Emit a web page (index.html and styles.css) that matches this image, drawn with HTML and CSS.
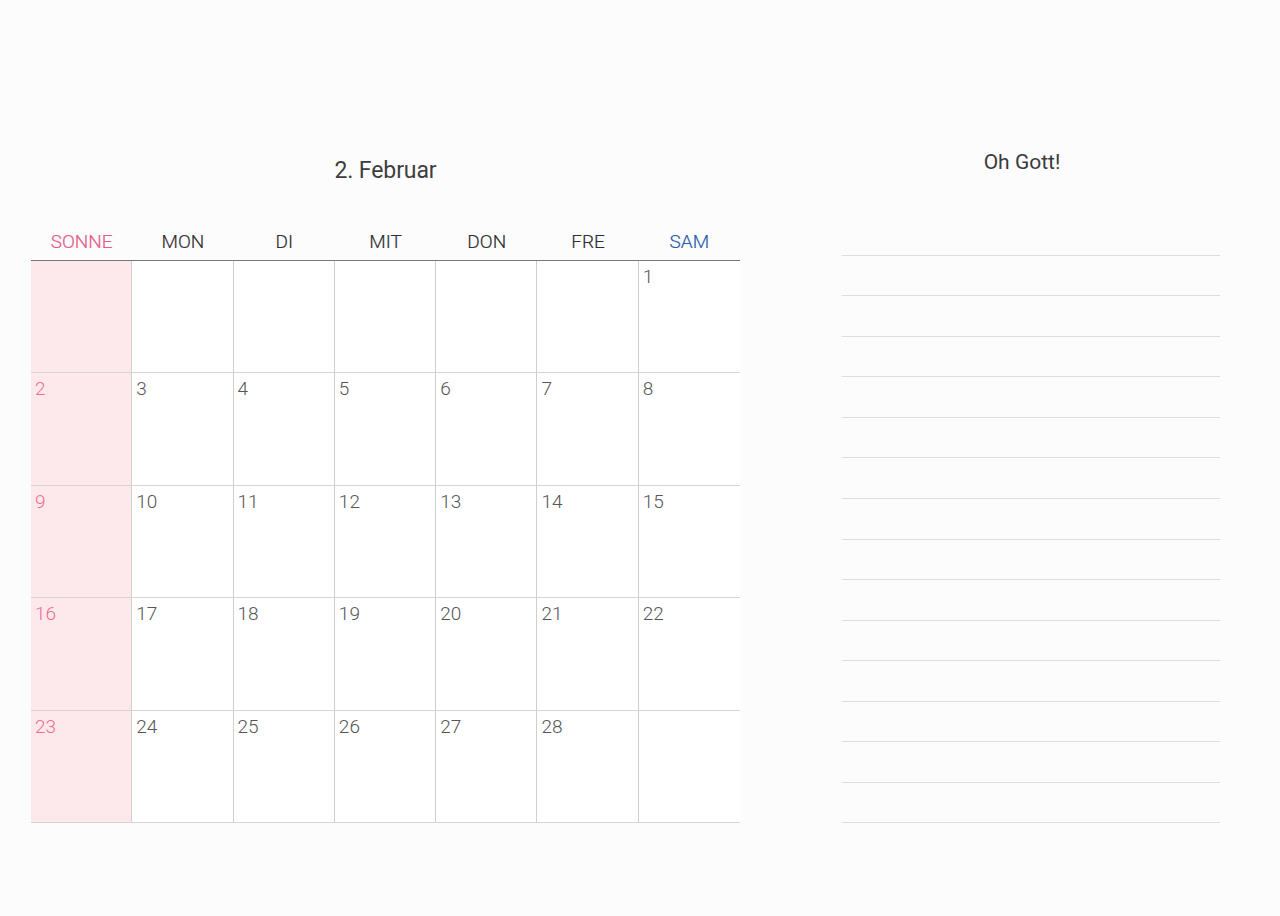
FILE: index.html
```html
<!DOCTYPE html>
<html lang="de">
<head>
<meta charset="utf-8">
<title>Februar</title>
<link rel="stylesheet" href="styles.css">
</head>
<body>
<div class="page">
  <section class="calendar">
    <h1 class="month-title">2. Februar</h1>
    <div class="weekdays">
      <div class="wd sun">SONNE</div>
      <div class="wd">MON</div>
      <div class="wd">DI</div>
      <div class="wd">MIT</div>
      <div class="wd">DON</div>
      <div class="wd">FRE</div>
      <div class="wd sat">SAM</div>
    </div>
    <div class="grid">
      <div class="cell sun"></div><div class="cell"></div><div class="cell"></div><div class="cell"></div><div class="cell"></div><div class="cell"></div><div class="cell last"><span>1</span></div>
      <div class="cell sun"><span>2</span></div><div class="cell"><span>3</span></div><div class="cell"><span>4</span></div><div class="cell"><span>5</span></div><div class="cell"><span>6</span></div><div class="cell"><span>7</span></div><div class="cell last"><span>8</span></div>
      <div class="cell sun"><span>9</span></div><div class="cell"><span>10</span></div><div class="cell"><span>11</span></div><div class="cell"><span>12</span></div><div class="cell"><span>13</span></div><div class="cell"><span>14</span></div><div class="cell last"><span>15</span></div>
      <div class="cell sun"><span>16</span></div><div class="cell"><span>17</span></div><div class="cell"><span>18</span></div><div class="cell"><span>19</span></div><div class="cell"><span>20</span></div><div class="cell"><span>21</span></div><div class="cell last"><span>22</span></div>
      <div class="cell sun"><span>23</span></div><div class="cell"><span>24</span></div><div class="cell"><span>25</span></div><div class="cell"><span>26</span></div><div class="cell"><span>27</span></div><div class="cell"><span>28</span></div><div class="cell last"></div>
    </div>
  </section>
  <section class="notes">
    <h2 class="notes-title">Oh Gott!</h2>
    <div class="lines">
      <div class="line"></div><div class="line"></div><div class="line"></div><div class="line"></div><div class="line"></div>
      <div class="line"></div><div class="line"></div><div class="line"></div><div class="line"></div><div class="line"></div>
      <div class="line"></div><div class="line"></div><div class="line"></div><div class="line"></div><div class="line"></div>
    </div>
  </section>
</div>
</body>
</html>
```
FILE: styles.css
```css
* { box-sizing: border-box; }
html, body {
  margin: 0;
  padding: 0;
  background: #fdfcfd;
  font-family: Roboto, "Liberation Sans", sans-serif;
  color: #444;
}
.page {
  display: flex;
  align-items: flex-start;
  padding-left: 31px;
  height: 916px;
}
.calendar {
  width: 709px;
  padding-top: 156px;
}
.month-title {
  margin: 0;
  text-align: center;
  font-size: 23px;
  line-height: 30px;
  font-weight: 400;
  color: #3d3d3d;
  letter-spacing: -0.1px;
}
.weekdays {
  display: grid;
  grid-template-columns: repeat(7, 1fr);
  margin-top: 44px;
  padding-bottom: 6px;
  border-bottom: 1px solid #777;
}
.wd {
  text-align: center;
  font-size: 19px;
  line-height: 24px;
  font-weight: 300;
  color: #2e2e2e;
  -webkit-text-stroke: 0.2px currentColor;
}
.wd.sun { color: #e55a88; }
.wd.sat { color: #2b5ba8; }
.grid {
  display: grid;
  grid-template-columns: repeat(7, 1fr);
  grid-template-rows: repeat(5, 112.4px);
  background: #fff;
}
.cell {
  border-right: 1px solid #cfcfcf;
  border-bottom: 1px solid #d4d4d4;
  padding: 5px 0 0 4px;
  font-size: 19px;
  line-height: 22px;
  font-weight: 300;
  color: #555;
}
.cell.last { border-right: none; }
.cell.sun {
  background: #fde9ec;
  color: #ec6d94;
}
.notes {
  margin-left: 102px;
  width: 378px;
  padding-top: 150px;
}
.notes-title {
  margin: 0;
  padding-right: 18px;
  text-align: center;
  font-size: 21px;
  line-height: 24px;
  font-weight: 400;
  color: #3a3a3a;
}
.lines {
  margin-top: 41px;
}
.line {
  height: 40.57px;
  border-bottom: 1px solid #dedbe2;
}
```
